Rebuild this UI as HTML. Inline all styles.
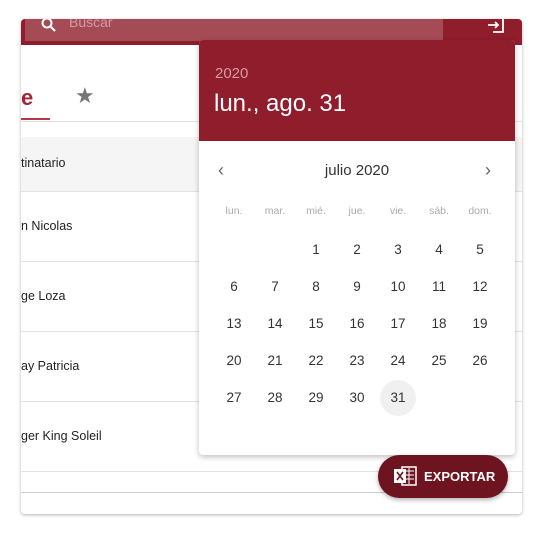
<!DOCTYPE html>
<html><head><meta charset="utf-8"><style>
*{margin:0;padding:0;box-sizing:border-box}
body{width:545px;height:533px;background:#fff;font-family:"Liberation Sans",sans-serif;position:relative;overflow:hidden;color:#222}
.a{position:absolute}
.card{left:21px;top:19px;width:501px;height:495px;background:#fff;border-radius:4px;box-shadow:0 1px 3px rgba(0,0,0,.3);overflow:hidden}
.row{left:0;width:501px;font-size:12.5px;color:#222}
.line{height:1px;background:#e2e2e2;left:0;width:501px}
.cal{left:199px;top:40px;width:316px;height:415px;background:#fff;border-radius:4px;box-shadow:0 2px 6px rgba(0,0,0,.25);overflow:hidden}
.n{position:absolute;width:36px;text-align:center;font-size:13.5px;color:#333}
.w{position:absolute;width:36px;text-align:center;font-size:10.5px;color:#aaa}
</style></head><body>
<div class="a card">
  <div class="a" style="left:0;top:0;width:501px;height:26px;background:#8f1d2c"></div>
  <div class="a" style="left:4px;top:0;width:418px;height:22px;background:#a44b56"></div>
  <svg class="a" style="left:20px;top:-2px" width="16" height="16" viewBox="0 0 16 16"><circle cx="6" cy="6" r="4.5" fill="none" stroke="#fff" stroke-width="2"/><path d="M9.5 9.5L14 14" stroke="#fff" stroke-width="2.2"/></svg>
  <div class="a" style="left:48px;top:-5px;font-size:14px;color:#d69aa2">Buscar</div>
  <svg class="a" style="left:465px;top:-3px" width="20" height="18" viewBox="0 0 20 18"><path d="M7 2h10v14H7M2 9h10M9 6l3 3-3 3" fill="none" stroke="#fff" stroke-width="1.8"/></svg>
  <div class="a" style="left:0;top:66px;font-size:22px;color:#a1263a;font-weight:bold">e</div>
  <div class="a" style="left:54px;top:64px;font-size:22px;color:#777">★</div>
  <div class="a" style="left:0;top:99px;width:29px;height:2px;background:#b43a48"></div>
  <div class="a line" style="top:102px"></div>
  <div class="a" style="left:0;top:118px;width:501px;height:54px;background:#f5f5f5"></div>
  <div class="a row" style="top:137px">tinatario</div>
  <div class="a line" style="top:172px"></div>
  <div class="a row" style="top:200px">n Nicolas</div>
  <div class="a line" style="top:242px"></div>
  <div class="a row" style="top:270px">ge Loza</div>
  <div class="a line" style="top:312px"></div>
  <div class="a row" style="top:340px">ay Patricia</div>
  <div class="a line" style="top:382px"></div>
  <div class="a row" style="top:410px">ger King Soleil</div>
  <div class="a line" style="top:452px"></div>
  <div class="a line" style="top:473px;background:#ccc"></div>
</div>
<div class="a cal">
  <div class="a" style="left:0;top:0;width:316px;height:101px;background:#8f1d2c"></div>
  <div class="a" style="left:16px;top:25px;font-size:15px;color:#d59aa3">2020</div>
  <div class="a" style="left:15px;top:50px;font-size:24px;color:#fff">lun., ago. 31</div>
  <div class="a" style="left:19px;top:120px;font-size:18px;color:#666">‹</div>
  <div class="a" style="left:0;width:316px;top:122px;text-align:center;font-size:15px;color:#333">julio 2020</div>
  <div class="a" style="left:286px;top:120px;font-size:18px;color:#666">›</div>
  <div class="w" style="left:17px;top:165px">lun.</div><div class="w" style="left:58px;top:165px">mar.</div><div class="w" style="left:99px;top:165px">mié.</div><div class="w" style="left:140px;top:165px">jue.</div><div class="w" style="left:181px;top:165px">vie.</div><div class="w" style="left:222px;top:165px">sáb.</div><div class="w" style="left:263px;top:165px">dom.</div>
  <div class="a" style="left:181px;top:340px;width:36px;height:36px;border-radius:50%;background:#f0f0f0"></div>
  <div id="g"></div>
</div>
<div class="a" style="left:378px;top:455px;width:130px;height:43px;border-radius:22px;background:#6e1420;box-shadow:0 2px 5px rgba(0,0,0,.3)"></div>
<svg class="a" style="left:394px;top:465px" width="24" height="22" viewBox="0 0 24 22"><rect x="8" y="2" width="14" height="18" fill="none" stroke="#fff" stroke-width="1.5"/><path d="M12 6h8M12 10h8M12 14h8M15 3v16" stroke="#fff" stroke-width="1"/><rect x="0" y="4" width="12" height="14" fill="#fff"/><path d="M3 7l6 8M9 7l-6 8" stroke="#6e1420" stroke-width="1.6"/></svg>
<div class="a" style="left:424px;top:469px;font-size:13px;font-weight:bold;color:#fff">EXPORTAR</div>
<script>
var g=document.getElementById('g'),h='',ys=[202,239,276,313,350];
for(var d=1;d<=31;d++){var i=d+1,c=i%7,r=Math.floor(i/7);h+='<div class="n" style="left:'+(17+41*c)+'px;top:'+ys[r]+'px">'+d+'</div>';}
g.innerHTML=h;
</script>
</body></html>
